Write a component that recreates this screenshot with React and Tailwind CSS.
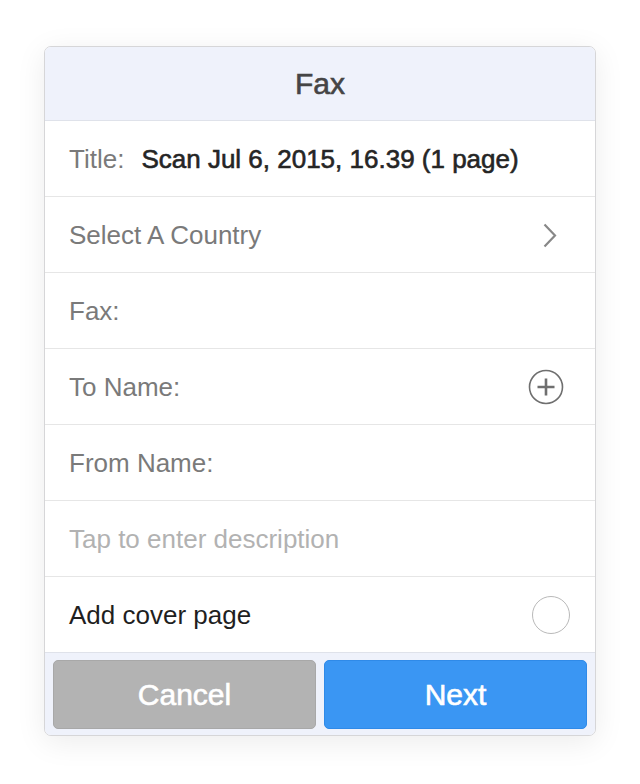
export default function App() {
  const font = { fontFamily: '"Liberation Sans", Arial, sans-serif' };
  const rowBase = 'h-[76px] flex items-center pl-6 pt-[1px] border-b border-[#e6e6e6]';

  return (
    <div className="w-[640px] h-[784px] bg-white pt-[46px]" style={font}>
      <div className="mx-auto w-[552px] h-[690px] rounded-[7px] border border-[#d6d6d8] bg-white overflow-hidden shadow-[0_6px_30px_rgba(0,0,0,0.08)] flex flex-col">
        <div className="h-[74px] shrink-0 bg-[#eff2fb] border-b border-[#dfe2ea] flex items-center justify-center">
          <span className="text-[30px] text-[#454545] [-webkit-text-stroke:0.6px_#454545]">Fax</span>
        </div>

        <div className={rowBase}>
          <span className="text-[26px] text-[#7a7a7a]">Title:</span>
          <span className="ml-[17px] text-[26px] text-[#252525] [-webkit-text-stroke:0.6px_#252525]">Scan Jul 6, 2015, 16.39 (1 page)</span>
        </div>

        <div className={`${rowBase} justify-between pr-[38px]`}>
          <span className="text-[26px] text-[#7a7a7a]">Select A Country</span>
          <svg width="14" height="25" viewBox="0 0 14 25" fill="none">
            <path d="M1.5 1.5 L12 12.5 L1.5 23.5" stroke="#888" strokeWidth="2.2" />
          </svg>
        </div>

        <div className={rowBase}>
          <span className="text-[26px] text-[#7a7a7a]">Fax:</span>
        </div>

        <div className={`${rowBase} justify-between pr-[31px]`}>
          <span className="text-[26px] text-[#7a7a7a]">To Name:</span>
          <svg width="36" height="36" viewBox="0 0 36 36" fill="none">
            <circle cx="18" cy="18" r="16.5" stroke="#6f6f6f" strokeWidth="1.6" />
            <path d="M18 9.5 V26.5 M9.5 18 H26.5" stroke="#6f6f6f" strokeWidth="2.6" />
          </svg>
        </div>

        <div className={rowBase}>
          <span className="text-[26px] text-[#7a7a7a]">From Name:</span>
        </div>

        <div className={rowBase}>
          <span className="text-[26px] text-[#b2b2b2]">Tap to enter description</span>
        </div>

        <div className="h-[76px] flex items-center justify-between pl-6 pr-[25px] pt-[1px] border-b border-[#dfe2ea]">
          <span className="text-[26px] text-[#1f1f1f]">Add cover page</span>
          <div className="w-[38px] h-[38px] rounded-full border border-[#b9b9b9]" />
        </div>

        <div className="flex-1 bg-[#eff2fb] flex gap-2 px-2 pt-[7px] pb-[6px]">
          <button className="flex-1 rounded-[5px] bg-[#b3b3b3] border border-[#a8a8a8] text-white text-[30px] [-webkit-text-stroke:0.6px_#ffffff]">
            Cancel
          </button>
          <button className="flex-1 rounded-[5px] bg-[#3a96f3] border border-[#2f8ae8] text-white text-[30px] [-webkit-text-stroke:0.6px_#ffffff]">
            Next
          </button>
        </div>
      </div>
    </div>
  );
}
